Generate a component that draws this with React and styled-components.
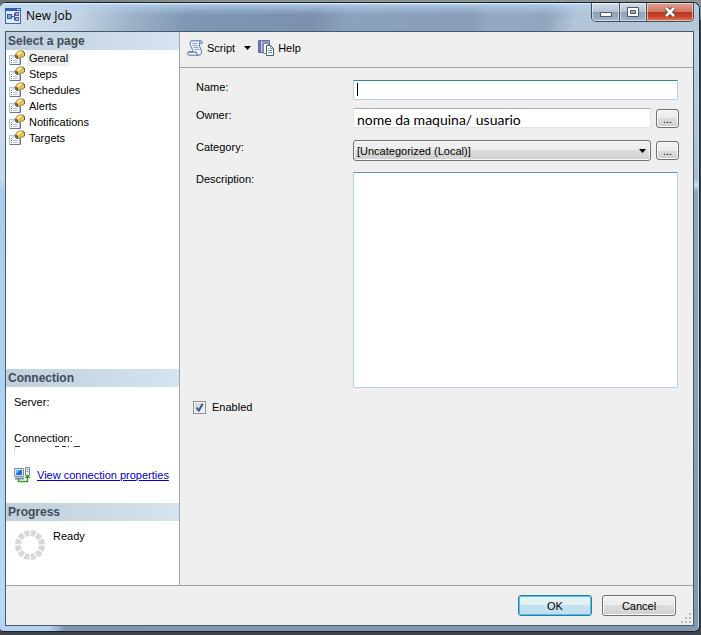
import { useState } from "react";
import styled, { createGlobalStyle } from "styled-components";

const GlobalStyle = createGlobalStyle`
  * {
    box-sizing: border-box;
  }

  body {
    margin: 0;
    background: #4a4f55;
    font-family: "Liberation Sans", Arial, sans-serif;
    font-size: 11px;
    line-height: 14px;
    color: #000;
  }

  button,
  input,
  select,
  textarea {
    font: inherit;
    color: inherit;
  }
`;

const Desktop = styled.div`
  display: flex;
  min-height: 100vh;
  padding: 2px 1px 3px 0;
  background: linear-gradient(to right, #6b7072, #8d9292 30%, #8d9292) top / 100% 20px no-repeat, #3f444a;
`;

const Window = styled.div`
  flex: 1;
  display: flex;
  flex-direction: column;
  padding: 0 5px 5px;
  border: 1px solid #1b232d;
  border-left: 0;
  border-radius: 6px 7px 6px 4px;
  box-shadow: inset 0 1px 0 #e6f1fb, inset -1px 0 0 #c9dcec;
  background:
    linear-gradient(to bottom, #c3d4e4, #a9bccf 28%, #d4dfea 29%, #8da6c0 30%, #7f99b5) right / 6px 100% no-repeat,
    linear-gradient(to right, #b5d3f1 0, #b5d3f1 50px, #7f95b0 65px, #8499b4) bottom / 100% 6px no-repeat,
    linear-gradient(to bottom, #d3e2f0, #c5d8ea 28%, #a9cdf2 30%, #b9d8f6) left / 6px 100% no-repeat,
    #8ba1bb;
`;

const TitleBar = styled.header`
  display: flex;
  align-items: flex-start;
  height: 28px;
  margin: 0 -5px;
  padding-left: 5px;
  border-radius: 6px 6px 0 0;
  background:
    linear-gradient(to bottom, #e3f0fc 0, #b4d3f0b0 2px, #b4d3f000 12px),
    linear-gradient(100deg, #d6e3ef 0, #c6d6e5 11%, #9db2c8 19%, #7f98b4 27%, #7b91ad 45%, #8ca3bd 50%, #879db8 67%, #94a9c1 70%, #90a5be 78%, #b1c4d8 82%, #b5c8da);
`;

const Title = styled.h1`
  display: flex;
  align-items: center;
  gap: 5px;
  flex: 1;
  margin: 0;
  padding-top: 5px;
  font: 12px/16px "Open Sans", "Noto Sans", sans-serif;
`;

const WindowButtons = styled.div`
  display: flex;
  height: 19px;
  margin-right: 5px;
  overflow: hidden;
  border: 1px solid #414d5d;
  border-top: 0;
  border-radius: 0 0 5px 5px;
`;

const WindowButton = styled.button`
  display: flex;
  align-items: center;
  justify-content: center;
  width: ${(props) => (props.$close ? "47px" : "27px")};
  padding: 0;
  border: 0;
  border-left: ${(props) => (props.$first ? "0" : "1px solid #414d5d")};
  box-shadow: inset 0 0 0 1px #ffffff80;
  background: ${(props) =>
    props.$close
      ? "linear-gradient(#e2a394, #cf7661 48%, #b93420 50%, #c4452c 75%, #d98159)"
      : "linear-gradient(#d4deea, #b3c2d2 48%, #8d9fb3 50%, #a5b6c8)"};
`;

const Client = styled.main`
  flex: 1;
  display: flex;
  flex-direction: column;
  border: 1px solid #48586b;
  background: #efefef;
`;

const Body = styled.div`
  flex: 1;
  display: flex;
  border-bottom: 1px solid #a0a4a8;
`;

const Sidebar = styled.aside`
  display: flex;
  flex-direction: column;
  width: 174px;
  border-right: 1px solid #a0a4a8;
  background: #fff;
`;

const Heading = styled.h2`
  margin: 0;
  padding: 2px;
  font-size: 12px;
  line-height: 14px;
  color: #404c58;
  background: linear-gradient(to right, #c0cfdc, #d6e4f2);
`;

const PageList = styled.nav`
  flex: 1;
  display: flex;
  flex-direction: column;
  align-items: flex-start;
`;

const PageButton = styled.button`
  display: flex;
  align-items: center;
  gap: 2px;
  height: 16px;
  padding: 0 0 0 3px;
  border: 0;
  background: none;

  span {
    padding: 1px 2px;
    background: ${(props) => (props.$active ? "#f0f0f0" : "none")};
  }
`;

const ConnectionInfo = styled.div`
  height: 116px;
  padding: 8px;

  p {
    height: 36px;
    margin: 0;
  }

  p svg {
    display: block;
  }
`;

const PropertiesLink = styled.a`
  display: flex;
  align-items: center;
  gap: 6px;
  color: #0000d0;
  white-space: nowrap;
`;

const ProgressInfo = styled.div`
  display: flex;
  gap: 7px;
  height: 64px;
  padding: 8px;
`;

const Content = styled.section`
  flex: 1;
  min-width: 0;
`;

const Toolbar = styled.div`
  display: flex;
  align-items: center;
  height: 36px;
  padding: 0 7px 4px;
  border-bottom: 1px solid #a0a4a8;
`;

const ToolButton = styled.button`
  display: flex;
  align-items: center;
  gap: 4px;
  padding: 0;
  border: 0;
  background: none;
`;

const DropButton = styled(ToolButton)`
  padding: 6px 7px 6px 9px;
`;

const Form = styled.form`
  padding: 12px 15px 12px 16px;
`;

const Row = styled.div`
  display: flex;
  align-items: flex-start;
  gap: 5px;
  min-height: ${(props) => (props.$tight ? "28px" : "32px")};

  label {
    width: 152px;
  }
`;

const TextInput = styled.input`
  flex: 1;
  min-width: 0;
  height: 20px;
  padding: 0 2px;
  border: 1px solid #b0d3ea;
  border-top-color: #3d7bad;
  border-radius: 1px;
  outline: 0;
  background: #fff;
`;

// shows the text cursor while the field is still empty
const NameInput = styled(TextInput)`
  &:placeholder-shown {
    caret-color: transparent;
    background: linear-gradient(#000, #000) 3px 2px / 1px 13px no-repeat, #fff;
  }
`;

const OwnerInput = styled(TextInput)`
  padding: 2px 3px 0;
  border-color: #e2e3ea;
  border-top-color: #abadb3;
  font: 14px/16px Lato, Carlito, sans-serif;
`;

const TextArea = styled.textarea`
  flex: 1;
  height: 216px;
  padding: 2px;
  border: 1px solid #b0d3ea;
  border-top-color: #5c93bc;
  border-radius: 1px;
  outline: 0;
  resize: none;
  background: #fff;
`;

const SelectBox = styled.div`
  flex: 1;
  display: grid;
  align-items: center;

  select,
  svg {
    grid-area: 1 / 1;
  }

  svg {
    justify-self: end;
    margin-right: 5px;
    pointer-events: none;
  }
`;

const Select = styled.select`
  width: 100%;
  height: 21px;
  padding: 0 3px;
  border: 1px solid #707070;
  border-radius: 3px;
  box-shadow: inset 0 0 0 1px #fafafa;
  background: linear-gradient(#f2f2f2, #ebebeb 50%, #dddddd 50%, #cfcfcf);
  appearance: none;
`;

const Button = styled.button`
  width: 74px;
  height: 21px;
  padding: 0;
  border: 1px solid ${(props) => (props.$primary ? "#2c7ba6" : "#707070")};
  border-radius: 3px;
  box-shadow: inset 0 0 0 ${(props) => (props.$primary ? "1px #4cc4ee" : "1px #fafafa")};
  background: ${(props) =>
    props.$primary
      ? "linear-gradient(#e9f5fb, #dceef6 50%, #c4e2ef 50%, #bfe0ee)"
      : "linear-gradient(#f2f2f2, #ebebeb 50%, #dddddd 50%, #cfcfcf)"};
`;

const BrowseButton = styled(Button)`
  width: 23px;
  height: 19px;
  margin: 1px -1px 0 0;
`;

const CheckLabel = styled.label`
  display: inline-flex;
  align-items: center;
  gap: 6px;
  margin: 12px 0 0 -3px;
`;

const Checkbox = styled.input`
  width: 13px;
  height: 13px;
  margin: 0;
  border: 1px solid #8e8f8f;
  box-shadow: inset 0 0 0 1px #f4f4f4;
  background: linear-gradient(135deg, #cbcfd5, #f6f6f6);
  appearance: none;

  &:checked {
    background:
      url("data:image/svg+xml,%3Csvg xmlns='http://www.w3.org/2000/svg' viewBox='0 0 11 11'%3E%3Cpath d='M2.5 5.5 4.8 8.6 8.6 1.8' fill='none' stroke='%233b5798' stroke-width='2'/%3E%3C/svg%3E"),
      linear-gradient(135deg, #cbcfd5, #f6f6f6);
  }
`;

const Footer = styled.footer`
  display: flex;
  justify-content: flex-end;
  gap: 10px;
  height: 39px;
  padding: 9px 1px 0 0;
`;

const Grip = styled.svg`
  align-self: flex-end;
  margin-left: -6px;
  margin-bottom: 1px;
`;

const AppIcon = () => (
  <svg width="16" height="16" viewBox="0 0 16 16">
    <rect x="0.5" y="0.5" width="15" height="15" fill="#dfe9f9" stroke="#3f68b4" />
    <path d="M0 0h16v3H0z" fill="#2f5cb5" />
    <path d="M12 1h3v1h-3z" fill="#b9cdf0" />
    <path d="M7 8.5h2M9.500 5.500v6M9 5.500h2M9 11.500h2" fill="none" stroke="#3c5da8" />
    <rect x="2.5" y="6.5" width="4" height="4" fill="#6da6ec" stroke="#2f5cb5" />
    <rect x="10.5" y="4.5" width="3" height="3" fill="#b4a9e4" stroke="#5558ab" />
    <rect x="10.5" y="9.5" width="3" height="3" fill="#b4a9e4" stroke="#5558ab" />
  </svg>
);

const PageIcon = () => (
  <svg width="16" height="16" viewBox="0 0 16 16">
    <path d="M.5 5.5h10v9H.5z" fill="#fbfcff" stroke="#b3bfd4" />
    <path d="M1 14.5h10.5V8" fill="none" stroke="#66769a" />
    <path d="M2 8.5h1M2 10.5h1M2 12.5h1" stroke="#5f7fbb" />
    <path d="M4 10.5h5M4 12.5h5" stroke="#bcc6d6" />
    <path d="M6 4.5 9.5 1h4.2l1.800 1.500V6L13 7.500l-2-.7-2 2.200L6 6.500z" fill="#ecc04f" stroke="#8a7233" strokeWidth=".8" />
    <path d="M9.500 1.500h4L10 5 8 4z" fill="#ffe698" />
    <path d="m13.500 1 2 1.500V6" fill="none" stroke="#4e6a48" />
    <path d="m5 6.500 2-2 2.500 2.500L8 9z" fill="#5e5a4a" />
    <path d="M3.500 6.500 5.500 5l1 1.500-2 1z" fill="#c7c9c4" />
  </svg>
);

const ScriptIcon = () => (
  <svg width="16" height="16" viewBox="0 0 16 16">
    <path d="M4 .8h9.5c1.500 0 2 1 1.700 2.600h-2.500c-.8 2 .3 4 1.300 6 1.300 2.800.6 5.800-2 5.800H2c-1.500 0-2-2.200-.7-3.200h4.200c.7-2-.7-3.500-1.600-5.500C2.900 4 2.700 1.500 4 .8z" fill="#e9f0fb" stroke="#5874a4" />
    <path d="M13.500 1c-1 .5-1 1.500-.8 2.400M1.300 12h8c-.3 1.500.6 3 2.200 3" fill="none" stroke="#4b6694" />
    <path d="M5.300 3.500h5M5.500 5.500h5M6.500 7.500h5M7.500 9.500h5" stroke="#91a8cc" />
  </svg>
);

const HelpIcon = () => (
  <svg width="16" height="16" viewBox="0 0 16 16">
    <path d="M.5.5h11v12H.5z" fill="#9496ca" stroke="#6c6da8" />
    <path d="M1 1h2v11H1z" fill="#7073b0" />
    <path d="M3.500 1v11" stroke="#c5c6e6" />
    <path d="M5.500 3.500h4l2 2v8h-6z" fill="#fff" stroke="#7788a8" />
    <path d="M8.500 5.500h4l3 3v7h-7z" fill="#fff" stroke="#485d83" />
    <path d="M12.500 5.500v3h3M10 10.500h4M10 12.500h4M10 8.500h1" fill="none" stroke="#7890b8" />
  </svg>
);

const ServerIcon = () => (
  <svg width="17" height="16" viewBox="0 0 17 16">
    <path d="M.5 1.500h9v8h-9z" fill="#dce5ef" stroke="#8193a8" />
    <path d="M2 3h6v5H2z" fill="#1e6fe0" />
    <path d="M2 3h4L2 7z" fill="#69b1ff" />
    <path d="M1 11.500h9" stroke="#76879a" strokeWidth="2" />
    <path d="M11.500.5h4v8h-4z" fill="#eef1f4" stroke="#7c8894" />
    <path d="M12.500 2.500h2M12.500 4.500h2" stroke="#8f9aa6" />
    <path d="M4.500 12v2.500h9V9" fill="none" stroke="#3d9a28" strokeWidth="1.5" />
    <path d="m10.500 11 3-3.500 3 3.500z" fill="#3d9a28" />
  </svg>
);

const MaskedName = () => (
  <svg width="68" height="10" viewBox="0 0 68 10">
    <path d="M1 1.500h5M41 1.500h4M48 1.500h4M54 1.500h1M60 1.500h6" stroke="#333" />
    <path d="M.5 2v7" stroke="#ecd6d6" />
  </svg>
);

const Arrow = () => (
  <svg width="7" height="4" viewBox="0 0 7 4">
    <path d="M0 0h7L3.500 4z" fill="#000" />
  </svg>
);

const Spinner = () => (
  <svg width="32" height="32" viewBox="0 0 32 32">
    <circle cx="16" cy="16" r="12" fill="none" stroke="#d8d8d8" strokeWidth="6" pathLength="120" strokeDasharray="8 2" strokeDashoffset="-1" />
  </svg>
);

const pages = ["General", "Steps", "Schedules", "Alerts", "Notifications", "Targets"];

const App = () => {
  const [page, setPage] = useState("General");

  return (
    <Desktop>
      <GlobalStyle />
      <Window>
        <TitleBar>
          <Title>
            <AppIcon />
            New Job
          </Title>
          <WindowButtons>
            <WindowButton $first aria-label="Minimize">
              <svg width="12" height="12" viewBox="0 0 12 12">
                <path d="M.5 6.500h11v4H.5z" fill="#fff" stroke="#4e5866" />
              </svg>
            </WindowButton>
            <WindowButton aria-label="Maximize">
              <svg width="12" height="12" viewBox="0 0 12 12">
                <path fillRule="evenodd" d="M.5 1.500h11v9H.5zM3.500 4.500h5v3h-5z" fill="#fff" stroke="#4e5866" />
              </svg>
            </WindowButton>
            <WindowButton $close aria-label="Close">
              <svg width="12" height="12" viewBox="0 0 12 12">
                <path d="m2 2 8 8M10 2l-8 8" stroke="#5a4045" strokeWidth="4.5" />
                <path d="m2 2 8 8M10 2l-8 8" stroke="#fff" strokeWidth="2.5" />
              </svg>
            </WindowButton>
          </WindowButtons>
        </TitleBar>
        <Client>
          <Body>
            <Sidebar>
              <Heading>Select a page</Heading>
              <PageList>
                {pages.map((name) => (
                  <PageButton key={name} $active={name === page} onClick={() => setPage(name)}>
                    <PageIcon />
                    <span>{name}</span>
                  </PageButton>
                ))}
              </PageList>
              <Heading>Connection</Heading>
              <ConnectionInfo>
                <p>Server:</p>
                <p>
                  Connection:
                  <MaskedName />
                </p>
                <PropertiesLink href="#properties">
                  <ServerIcon />
                  View connection properties
                </PropertiesLink>
              </ConnectionInfo>
              <Heading>Progress</Heading>
              <ProgressInfo>
                <Spinner />
                Ready
              </ProgressInfo>
            </Sidebar>
            <Content>
              <Toolbar>
                <ToolButton>
                  <ScriptIcon />
                  Script
                </ToolButton>
                <DropButton aria-label="Script options">
                  <Arrow />
                </DropButton>
                <ToolButton>
                  <HelpIcon />
                  Help
                </ToolButton>
              </Toolbar>
              <Form onSubmit={(e) => e.preventDefault()}>
                <Row $tight>
                  <label htmlFor="name">Name:</label>
                  <NameInput id="name" placeholder=" " autoFocus />
                </Row>
                <Row>
                  <label htmlFor="owner">Owner:</label>
                  <OwnerInput id="owner" defaultValue="nome da maquina/ usuario" />
                  <BrowseButton type="button" aria-label="Browse owners">...</BrowseButton>
                </Row>
                <Row>
                  <label htmlFor="category">Category:</label>
                  <SelectBox>
                    <Select id="category">
                      <option>[Uncategorized (Local)]</option>
                    </Select>
                    <Arrow />
                  </SelectBox>
                  <BrowseButton type="button" aria-label="Browse categories">...</BrowseButton>
                </Row>
                <Row>
                  <label htmlFor="description">Description:</label>
                  <TextArea id="description" />
                </Row>
                <CheckLabel>
                  <Checkbox type="checkbox" defaultChecked />
                  Enabled
                </CheckLabel>
              </Form>
            </Content>
          </Body>
          <Footer>
            <Button $primary>OK</Button>
            <Button>Cancel</Button>
            <Grip width="12" height="12" viewBox="0 0 12 12">
              <path d="M9 1h2v2H9zM9 5h2v2H9zM5 5h2v2H5zM9 9h2v2H9zM5 9h2v2H5zM1 9h2v2H1z" fill="#bcbcbc" />
            </Grip>
          </Footer>
        </Client>
      </Window>
    </Desktop>
  );
};

export default App;
